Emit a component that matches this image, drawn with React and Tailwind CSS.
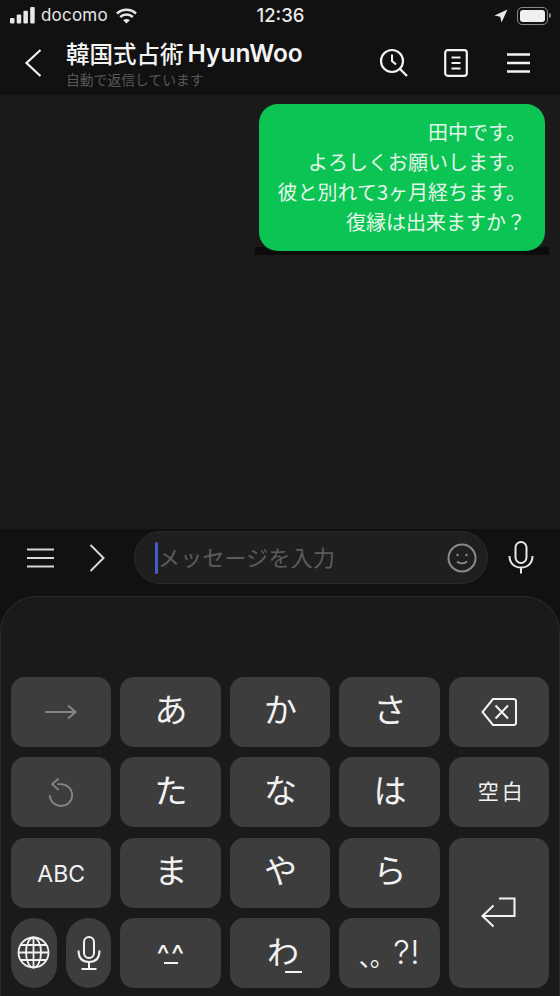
const JP = { fontFamily: '"Noto Sans CJK JP", "Liberation Sans", sans-serif' };
const INTER = { fontFamily: '"Inter", "Liberation Sans", sans-serif' };

function Key({ children, className = "" }) {
  return (
    <div className={`flex items-center justify-center rounded-[14px] bg-[#3d3d3d] text-[#f2f2f2] ${className}`}>
      {children}
    </div>
  );
}

function Kana({ children }) {
  return <Key className="pb-[6px] pl-[1px] text-[33px]">{children}</Key>;
}

function Menu({ w = 28, color = "#f2f2f2", sw = 2.4 }) {
  return (
    <svg width={w} height="24" viewBox={`0 0 ${w} 24`} fill="none" stroke={color} strokeWidth={sw}>
      <path d={`M0 3.5H${w}M0 12H${w}M0 20.5H${w}`} />
    </svg>
  );
}

export default function App() {
  return (
    <div className="flex h-[996px] w-[560px] flex-col overflow-hidden bg-[#1a1a1a]" style={JP}>
      {/* status bar */}
      <div className="flex h-[31px] shrink-0 items-center justify-between bg-[#111111] pl-[10px] pr-[9px] text-[#e8e8e8]">
        <div className="flex w-[170px] items-center">
          <svg width="25" height="17" viewBox="0 0 25 17" fill="#e8e8e8">
            <rect x="0" y="11" width="4.5" height="5.5" rx="1" />
            <rect x="6.7" y="7.5" width="4.5" height="9" rx="1" />
            <rect x="13.4" y="3.7" width="4.5" height="12.8" rx="1" />
            <rect x="20.2" y="0" width="4.5" height="16.5" rx="1" />
          </svg>
          <span className="ml-[6px] text-[17px] leading-none tracking-[0.2px]" style={INTER}>docomo</span>
          <svg className="ml-[8px]" width="21" height="16" viewBox="0 0 21 16" fill="none" stroke="#e8e8e8" strokeWidth="2.5">
            <path d="M1 5.5C6.5 .5 14.5 .5 20 5.5M4.2 9C7.8 5.6 13.2 5.6 16.8 9" />
            <path d="M10.5 15.5L7.2 12.2C9 10.6 12 10.6 13.8 12.2Z" fill="#e8e8e8" stroke="none" />
          </svg>
        </div>
        <span className="text-[18.5px] font-medium leading-none" style={INTER}>12:36</span>
        <div className="flex w-[170px] items-center justify-end">
          <svg width="14" height="14" viewBox="0 0 14 14" fill="#e8e8e8">
            <path d="M13.5 .5L7.5 13.5L6.2 7.8L.5 6.5Z" />
          </svg>
          <div className="ml-[9px] flex h-[18px] w-[31px] items-center rounded-[5px] border border-[#8a8a8a] p-[2px]">
            <div className="h-full w-full rounded-[3px] bg-[#f0f0f0]" />
          </div>
          <div className="ml-px h-[5px] w-[1.5px] rounded-r bg-[#8a8a8a]" />
        </div>
      </div>

      {/* header */}
      <div className="flex h-[64px] shrink-0 items-center bg-[#111111]">
        <div className="flex w-[66px] justify-center">
          <svg className="ml-[-1px]" width="18" height="28" viewBox="0 0 18 28" fill="none" stroke="#f2f2f2" strokeWidth="2.2">
            <path d="M16.5 1L2.5 14L16.5 27" />
          </svg>
        </div>
        <div className="flex-1">
          <div className="flex text-[23.5px] font-medium leading-[28px] text-[#f4f4f4]">
            <span>韓国式占術</span>
            <span className="ml-[4px] text-[24.5px] font-semibold" style={INTER}>HyunWoo</span>
          </div>
          <div className="mt-[3px] text-[13.8px] leading-[18px] text-[#585858]">自動で返信しています</div>
        </div>
        <div className="flex items-center pr-[30px]">
          <svg width="30" height="30" viewBox="0 0 30 30" fill="none" stroke="#f2f2f2" strokeWidth="2.2">
            <circle cx="13" cy="13" r="11" />
            <path d="M13 6.5V13L17 16.5" strokeWidth="2" />
            <path d="M21 21L28 28" strokeWidth="2.4" />
          </svg>
          <svg className="ml-[35px]" width="24" height="28" viewBox="0 0 24 28" fill="none" stroke="#f2f2f2" strokeWidth="2.2">
            <rect x="1.2" y="1.2" width="21.6" height="25.6" rx="2.5" />
            <path d="M7.5 8.5H16.5M7.5 14H16.5M7.5 19.5H16.5" />
          </svg>
          <div className="ml-[39px]"><Menu w={23} /></div>
        </div>
      </div>

      {/* chat */}
      <div className="flex flex-1 justify-end bg-[#1a1a1a] pr-[15px] pt-[9px]">
        <div className="relative h-[147px] w-[286px]">
          <div className="absolute -left-[4px] -right-[4px] -bottom-[4px] h-[8px] bg-[#0c0c0c]" />
          <div className="relative h-full rounded-[19px] bg-[#0bc454] pr-[19px] pt-[13px] text-right text-[20px] leading-[30px] text-[#e4f6ea]">
            <div>田中です。</div>
            <div>よろしくお願いします。</div>
            <div>彼と別れて3ヶ月経ちます。</div>
            <div>復縁は出来ますか？</div>
          </div>
        </div>
      </div>

      {/* composer */}
      <div className="flex h-[67px] shrink-0 items-start bg-[#111111] pt-[2px]">
        <div className="ml-[27px] mt-[15px]"><Menu w={27} color="#d8d8d8" sw={1.8} /></div>
        <svg className="ml-[35px] mt-[13px]" width="16" height="28" viewBox="0 0 16 28" fill="none" stroke="#d8d8d8" strokeWidth="2">
          <path d="M1.5 1L14.5 14L1.5 27" />
        </svg>
        <div className="ml-[29px] flex h-[53px] w-[354px] items-center rounded-[27px] border border-[#2a2a2a] bg-[#1f1f1f] pl-[20px] pr-[10px]">
          <div className="h-[32px] w-[3px] rounded-sm bg-[#3f5fc8]" />
          <span className="flex-1 pb-[3px] text-[22px] leading-none tracking-[0.2px] text-[#5c5c5c]">メッセージを入力</span>
          <svg width="30" height="30" viewBox="0 0 30 30" fill="none" stroke="#8a8a8a" strokeWidth="2">
            <circle cx="15" cy="15" r="13.5" />
            <circle cx="10.5" cy="12" r="1.2" fill="#8a8a8a" stroke="none" />
            <circle cx="19.5" cy="12" r="1.2" fill="#8a8a8a" stroke="none" />
            <path d="M10 18.5C12.5 21 17.5 21 20 18.5" strokeWidth="1.8" />
          </svg>
        </div>
        <svg className="ml-[20px] mt-[10px]" width="26" height="33" viewBox="0 0 26 33" fill="none" stroke="#e8e8e8" strokeWidth="2">
          <rect x="7.5" y="1" width="11" height="21" rx="5.5" />
          <path d="M1.5 15C1.5 22 6 26.5 13 26.5C20 26.5 24.5 22 24.5 15M13 26.5V32.5" />
        </svg>
      </div>

      {/* keyboard */}
      <div className="h-[400px] shrink-0 bg-[#111111]">
        <div className="h-full rounded-t-[36px] border-x border-t border-[#2b2b2b] bg-[#1a1a1a] px-[10px] pt-[80px]">
          <div className="grid grid-cols-5 grid-rows-[70px_70px_70px_70px] gap-x-[9px] gap-y-[10.3px]">
            <Key>
              <svg width="32" height="16" viewBox="0 0 32 16" fill="none" stroke="#858585" strokeWidth="2">
                <path d="M0 8H30M23 1.5L30.5 8L23 14.5" />
              </svg>
            </Key>
            <Kana>あ</Kana>
            <Kana>か</Kana>
            <Kana>さ</Kana>
            <Key>
              <svg width="36" height="30" viewBox="0 0 36 30" fill="none" stroke="#f2f2f2" strokeWidth="2">
                <path d="M12 2H32.5C34 2 35 3 35 4.5V25.5C35 27 34 28 32.5 28H12L1.5 15Z" />
                <path d="M14.5 8.5L27 21.5M27 8.5L14.5 21.5" />
              </svg>
            </Key>

            <Key>
              <svg width="26" height="31" viewBox="0 0 28 32" fill="none" stroke="#858585" strokeWidth="2">
                <path d="M10 7H13.5C20 7 26 11.5 26 19C26 25.5 20.5 30.5 14 30.5C7.5 30.5 2 25.5 2 19" />
                <path d="M11.5 1L4.5 7L11.5 13.5" />
              </svg>
            </Key>
            <Kana>た</Kana>
            <Kana>な</Kana>
            <Kana>は</Kana>
            <Key className="pb-[4px] pl-[6px] text-[21px] tracking-[3px]">空白</Key>

            <Key className="pt-[3px] text-[23px]"><span style={INTER}>ABC</span></Key>
            <Kana>ま</Kana>
            <Kana>や</Kana>
            <Kana>ら</Kana>
            <Key className="row-span-2">
              <svg width="36" height="32" viewBox="0 0 36 32" fill="none" stroke="#f2f2f2" strokeWidth="2.1">
                <path d="M18 1.5H33.5V19H2M12.5 8.5L1.5 19L12.5 29.5" />
              </svg>
            </Key>

            <div className="flex gap-[9px]">
              <Key className="flex-1 rounded-[23px]">
                <svg width="33" height="33" viewBox="0 0 33 33" fill="none" stroke="#f2f2f2" strokeWidth="1.8">
                  <circle cx="16.5" cy="16.5" r="15" />
                  <ellipse cx="16.5" cy="16.5" rx="7.5" ry="15" />
                  <path d="M16.5 1.5V31.5M1.5 16.5H31.5M3.5 9H29.5M3.5 24H29.5" />
                </svg>
              </Key>
              <Key className="flex-1 rounded-[23px]">
                <svg width="24" height="34" viewBox="0 0 24 34" fill="none" stroke="#f2f2f2" strokeWidth="2">
                  <rect x="7" y="1" width="10" height="21" rx="5" />
                  <path d="M1.5 14.5C1.5 22 5.5 26 12 26C18.5 26 22.5 22 22.5 14.5M12 26V33M4.5 33H19.5" />
                </svg>
              </Key>
            </div>
            <Key className="flex-col pl-[1px] pt-[3px]">
              <span className="text-[28px] leading-[20px] tracking-[1.5px]" style={INTER}>^^</span>
              <div className="mt-[-3px] h-[2px] w-[14px] bg-[#f2f2f2]" />
            </Key>
            <Key className="pb-[6px] pl-[9px] text-[32px]">
              <span>わ</span>
              <div className="ml-[-14px] mt-[44px] h-[2px] w-[17px] bg-[#f2f2f2]" />
            </Key>
            <Key className="leading-none">
              <span className="mt-[5px] text-[25px] tracking-[-1.5px]">、。</span>
              <span className="ml-[0px] text-[33px] font-light tracking-[0.5px]" style={INTER}>?!</span>
            </Key>
          </div>
        </div>
      </div>
    </div>
  );
}
